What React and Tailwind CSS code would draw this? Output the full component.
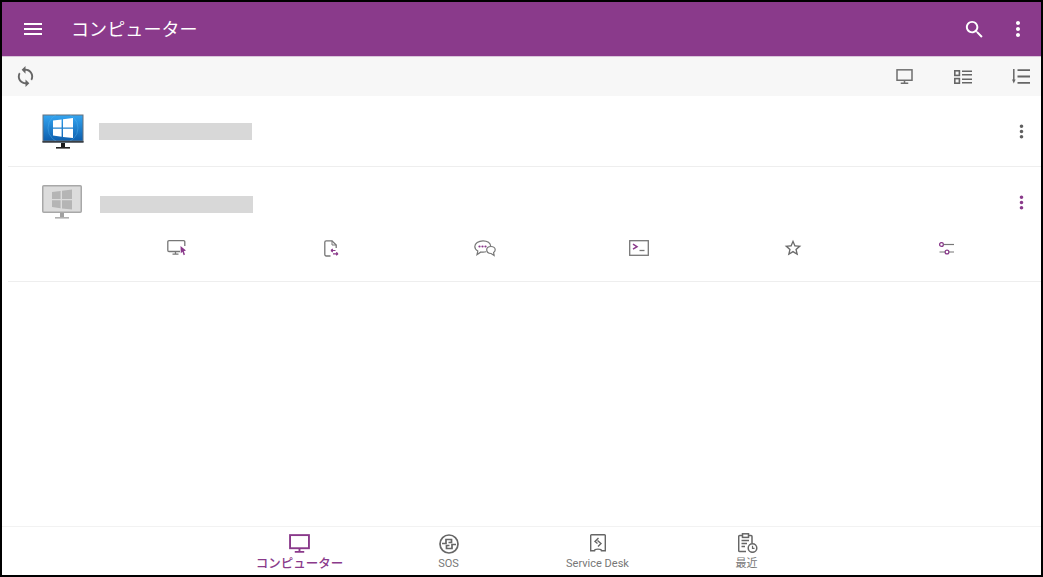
import React from "react";

const PURPLE = "#8a3a8b";

const MENU = "M3 18h18v-2H3v2zm0-5h18v-2H3v2zm0-7v2h18V6H3z";
const SEARCH = "M15.5 14h-.79l-.28-.27C15.41 12.59 16 11.11 16 9.5 16 5.91 13.09 3 9.5 3S3 5.91 3 9.5 5.91 16 9.5 16c1.61 0 3.09-.59 4.23-1.57l.27.28v.79l5 4.99L20.49 19l-4.99-5zm-6 0C7.01 14 5 11.99 5 9.5S7.01 5 9.5 5 14 7.01 14 9.5 11.99 14 9.5 14z";
const MORE = "M12 8c1.1 0 2-.9 2-2s-.9-2-2-2-2 .9-2 2 .9 2 2 2zm0 2c-1.1 0-2 .9-2 2s.9 2 2 2 2-.9 2-2-.9-2-2-2zm0 6c-1.1 0-2 .9-2 2s.9 2 2 2 2-.9 2-2-.9-2-2-2z";
const SYNC = "M12 4V1L8 5l4 4V6c3.31 0 6 2.69 6 6 0 1.01-.25 1.97-.7 2.8l1.46 1.46C19.54 15.03 20 13.57 20 12c0-4.42-3.58-8-8-8zm0 14c-3.31 0-6-2.69-6-6 0-1.01.25-1.97.7-2.8L5.24 7.74C4.46 8.97 4 10.43 4 12c0 4.42 3.58 8 8 8v3l4-4-4-4v3z";
const STAR = "M22 9.24l-7.19-.62L12 2 9.19 8.63 2 9.24l5.46 4.73L5.82 21 12 17.27 18.18 21l-1.63-7.03L22 9.24zM12 15.4l-3.76 2.27 1-4.28-3.32-2.88 4.38-.38L12 6.1l1.71 4.04 4.38.38-3.32 2.88 1 4.28L12 15.4z";

function Mi({ d, size = 24, color = "currentColor", className }) {
  return (
    <svg width={size} height={size} viewBox="0 0 24 24" fill={color} className={className}>
      <path d={d} />
    </svg>
  );
}

function WinLogo({ fill, x = 0, y = 0 }) {
  return (
    <g transform={`translate(${x} ${y})`} fill={fill}>
      <path d="M0 2.6 L8.6 1.4 V9.4 H0 Z" />
      <path d="M10 1.2 L20 0 V9.4 H10 Z" />
      <path d="M0 10.8 H8.6 V18.8 L0 17.6 Z" />
      <path d="M10 10.8 H20 V20 L10 18.9 Z" />
    </g>
  );
}

function ColorMonitor() {
  return (
    <svg width="42" height="36" viewBox="0 0 42 36">
      <defs>
        <linearGradient id="scr" x1="0" y1="0" x2="0" y2="1">
          <stop offset="0" stopColor="#33a4f0" />
          <stop offset="1" stopColor="#0d5fae" />
        </linearGradient>
      </defs>
      <rect x="0.5" y="0.5" width="41" height="28" fill="#66717c" />
      <rect x="1.5" y="1.5" width="39" height="25" fill="url(#scr)" />
      <circle cx="21" cy="14" r="15" fill="none" stroke="#5db9f3" strokeOpacity="0.35" />
      <rect x="0.5" y="27" width="41" height="1.6" fill="#3b3f44" />
      <rect x="19" y="29" width="4" height="4" fill="#1b1b1b" />
      <rect x="14" y="33" width="14" height="1.6" fill="#222" />
      <WinLogo fill="#ffffff" x="11" y="4" />
    </svg>
  );
}

function GreyMonitor() {
  return (
    <svg width="40" height="34" viewBox="0 0 40 34">
      <rect x="0.75" y="0.75" width="38.5" height="26.5" rx="1" fill="#dcdcdc" stroke="#a8a8a8" strokeWidth="1.5" />
      <rect x="18" y="28" width="4" height="4" fill="#a0a0a0" />
      <rect x="13" y="32" width="14" height="1.6" fill="#b0b0b0" />
      <WinLogo fill="#b5b5b5" x="10" y="4.5" />
    </svg>
  );
}

// square cornered screen, used in the toolbar and in the bottom nav
function ScreenIcon({ width, height, color, strokeWidth }) {
  return (
    <svg width={width} height={height} viewBox="0 0 20 18" fill="none" stroke={color} strokeWidth={strokeWidth}>
      <rect x="1" y="1" width="18" height="12.5" />
      <path d="M10 13.5V17M5.5 17H14.5" />
    </svg>
  );
}

function ListViewIcon() {
  return (
    <svg width="18" height="14" viewBox="0 0 18 14" fill="none" stroke="#666666" strokeWidth="1.6">
      <rect x="0.8" y="0.8" width="4.6" height="4.6" />
      <rect x="0.8" y="8.6" width="4.6" height="4.6" />
      <path d="M8 1.2H18M8 4.8H18M8 9.2H18M8 12.8H18" />
    </svg>
  );
}

function SortIcon() {
  return (
    <svg width="18" height="15" viewBox="0 0 18 15" fill="none" stroke="#666666" strokeWidth="1.8">
      <path d="M5.5 1.2H18M5.5 7.5H18M5.5 13.8H18" />
      <path d="M1.8 0V12" strokeWidth="1.5" />
      <path d="M0 10.5H3.6L1.8 14.5Z" fill="#666666" stroke="none" />
    </svg>
  );
}

function RemoteIcon() {
  return (
    <svg width="20" height="16" viewBox="0 0 20 16" fill="none">
      <path d="M13 11.5H2A1.2 1.2 0 0 1 .8 10.3V1.9A1.2 1.2 0 0 1 2 .7h14.6a1.2 1.2 0 0 1 1.2 1.2V6" stroke="#777" strokeWidth="1.3" />
      <path d="M8.5 11.5V14M5.5 14.2H11.5" stroke="#777" strokeWidth="1.3" />
      <path d="M13.5 6L19 10.6L16.8 11.2L18 14.6L16.6 15.2L15.5 11.8L13.8 13.2Z" fill={PURPLE} />
    </svg>
  );
}

function FileTransferIcon() {
  return (
    <svg width="15" height="17" viewBox="0 0 15 17" fill="none">
      <path d="M6.5 16H2.2A1.4 1.4 0 0 1 .8 14.6V2.2A1.4 1.4 0 0 1 2.2 .8H8L12.2 5V8" stroke="#777" strokeWidth="1.3" />
      <path d="M8 .8V5H12.2" stroke="#777" strokeWidth="1" />
      <path d="M7 10.5H11.5M7 10.5L8.8 9M7 10.5L8.8 12M9 13.8H14M14 13.8L12.2 12.4M14 13.8L12.2 15.2" stroke={PURPLE} strokeWidth="1.2" />
    </svg>
  );
}

function ChatIcon() {
  return (
    <svg width="22" height="17" viewBox="0 0 22 17" fill="none">
      <path d="M9 .8C4.5 .8.8 3.2.8 6.5c0 1.9 1.2 3.5 3 4.6L3 14.6l4-2.6c.7.1 1.3.2 2 .2 1 0 2-.1 3-.4" stroke="#777" strokeWidth="1.2" />
      <path d="M9 .8c4.5 0 7.6 2.4 7.6 5.2" stroke="#777" strokeWidth="1.2" />
      <path d="M17 6.5c2.4 0 4.2 1.5 4.2 3.3 0 1.1-.6 2-1.6 2.7l.5 3-3-2c-2.6 0-4.4-1.6-4.4-3.7 0-1.8 1.8-3.3 4.3-3.3Z" stroke="#777" strokeWidth="1.2" fill="#fff" />
      <circle cx="5.5" cy="6.5" r="1.1" fill={PURPLE} />
      <circle cx="8.5" cy="6.5" r="1.1" fill={PURPLE} />
      <circle cx="11.5" cy="6.5" r="1.1" fill={PURPLE} />
    </svg>
  );
}

function TerminalIcon() {
  return (
    <svg width="20" height="16" viewBox="0 0 20 16" fill="none">
      <rect x="0.7" y="0.7" width="18.6" height="14.6" stroke="#777" strokeWidth="1.3" />
      <path d="M4 4.2L8 6.7L4 9.2" stroke={PURPLE} strokeWidth="1.5" />
      <path d="M10.5 10.5H15.5" stroke="#777" strokeWidth="1.3" />
    </svg>
  );
}

function SlidersIcon() {
  return (
    <svg width="16" height="13" viewBox="0 0 16 13" fill="none">
      <circle cx="2.5" cy="2.5" r="1.9" stroke={PURPLE} strokeWidth="1.3" />
      <path d="M4.5 2.5H15" stroke="#777" strokeWidth="1.2" />
      <circle cx="8" cy="10" r="1.9" stroke={PURPLE} strokeWidth="1.3" />
      <path d="M.5 10H6M10 10H15" stroke="#777" strokeWidth="1.2" />
    </svg>
  );
}

function SosIcon() {
  return (
    <svg width="20" height="20" viewBox="0 0 20 20" fill="none" stroke="#666666" strokeWidth="1.7" className="mt-[2px]">
      <circle cx="10" cy="10" r="9" />
      <path d="M3 9.5H7V5.5H12.5V8.5H9.5" />
      <path d="M17 10.5H13V14.5H7.5V11.5H10.5" />
    </svg>
  );
}

function ServiceDeskIcon() {
  return (
    <svg width="16" height="18" viewBox="0 0 16 18" fill="none" stroke="#666666" strokeWidth="1.4">
      <path d="M1.5 .8H14.5A.8 .8 0 0 1 15.3 1.6V16.8H11.5C11.5 14.5 4.5 14.5 4.5 16.8H.7V1.6A.8 .8 0 0 1 1.5 .8Z" />
      <path d="M8.5 4L5 7.5L7.5 9.5" />
      <path d="M7.5 6.5L11 9.5L8 12.5" />
    </svg>
  );
}

function RecentIcon() {
  return (
    <svg width="20" height="20" viewBox="0 0 20 20" fill="none" stroke="#666666" strokeWidth="1.5" className="ml-[2px]">
      <path d="M8 18.5H1.7A1 1 0 0 1 .7 17.5V3.5A1 1 0 0 1 1.7 2.5H4M11 2.5H13A1 1 0 0 1 14 3.5V10" />
      <rect x="4.5" y=".8" width="6" height="3.6" />
      <path d="M3.5 7.5H11M3.5 10.5H9M3.5 13.5H7" />
      <circle cx="14.5" cy="15" r="4.3" fill="#ffffff" />
      <path d="M14.5 12.8V15.3H16.5" strokeWidth="1.2" />
    </svg>
  );
}

function NavItem({ icon, label, labelClass }) {
  return (
    <div className="flex flex-col items-center">
      <div className="flex h-[22px] items-center justify-center">{icon}</div>
      <span className={`mt-[3px] leading-[14px] whitespace-nowrap ${labelClass}`}>{label}</span>
    </div>
  );
}

export default function App() {
  const actions = [
    <RemoteIcon key="remote" />,
    <FileTransferIcon key="file" />,
    <ChatIcon key="chat" />,
    <TerminalIcon key="term" />,
    <Mi key="star" d={STAR} size={20} color="#6b6b6b" />,
    <SlidersIcon key="sliders" />,
  ];

  return (
    <div
      className="flex h-[577px] w-[1043px] flex-col overflow-hidden border-2 border-black bg-white"
      style={{ fontFamily: '"Roboto", "Noto Sans CJK JP", sans-serif' }}
    >
      <header className="flex h-[55px] shrink-0 items-center border-b border-[#d9c6da] bg-[#8a3a8b] text-white">
        <Mi d={MENU} size={24} className="ml-[19px]" />
        <h1 className="ml-[26px] text-[18px] font-normal tracking-[0.1px]">コンピューター</h1>
        <Mi d={SEARCH} size={23} className="ml-auto mr-[20px]" />
        <Mi d={MORE} size={24} className="mr-[11px]" />
      </header>

      <div className="flex h-[39px] shrink-0 items-center bg-[#f7f7f7] pr-[11px]">
        <Mi d={SYNC} size={23} color="#666666" className="ml-[12px]" />
        <div className="ml-auto mr-[41px] flex"><ScreenIcon width={17} height={15} color="#6f6f6f" strokeWidth={1.8} /></div>
        <div className="mr-[40px]"><ListViewIcon /></div>
        <SortIcon />
      </div>

      <div className="ml-[6px] flex h-[71px] shrink-0 items-center border-b border-[#eeeeee]">
        <div className="ml-[34px] mt-[2px]"><ColorMonitor /></div>
        <div className="ml-[15px] h-[17px] w-[153px] bg-[#d8d8d8]" />
        <Mi d={MORE} size={21} color="#5f5f5f" className="ml-auto mr-[9px]" />
      </div>

      <div className="ml-[6px] h-[115px] shrink-0 border-b border-[#eeeeee]">
        <div className="flex h-[70px] items-center">
          <div className="ml-[34px] mt-[-1px]"><GreyMonitor /></div>
          <div className="ml-[18px] mt-[5px] h-[17px] w-[153px] bg-[#d8d8d8]" />
          <Mi d={MORE} size={21} color={PURPLE} className="ml-auto mr-[9px] mt-[1px]" />
        </div>
        <div className="ml-[92px] mr-[17px] mt-[-1px] grid grid-cols-6">
          {actions.map((icon, i) => (
            <div key={i} className="flex h-[24px] items-center justify-center">{icon}</div>
          ))}
        </div>
      </div>

      <div className="flex-1" />

      <nav className="flex h-[49px] shrink-0 justify-center border-t border-[#f2f2f2] pl-[3px] pt-[5px]">
        <div className="grid w-[596px] grid-cols-4">
          <NavItem
            label="コンピューター"
            labelClass="text-[12.5px] font-medium text-[#8a3a8b]"
            icon={<ScreenIcon width={21} height={19} color={PURPLE} strokeWidth={1.8} />}
          />
          <NavItem label="SOS" labelClass="text-[11px] text-[#777777]" icon={<SosIcon />} />
          <NavItem label="Service Desk" labelClass="text-[11px] text-[#777777]" icon={<ServiceDeskIcon />} />
          <NavItem label="最近" labelClass="text-[11px] text-[#777777]" icon={<RecentIcon />} />
        </div>
      </nav>
    </div>
  );
}
